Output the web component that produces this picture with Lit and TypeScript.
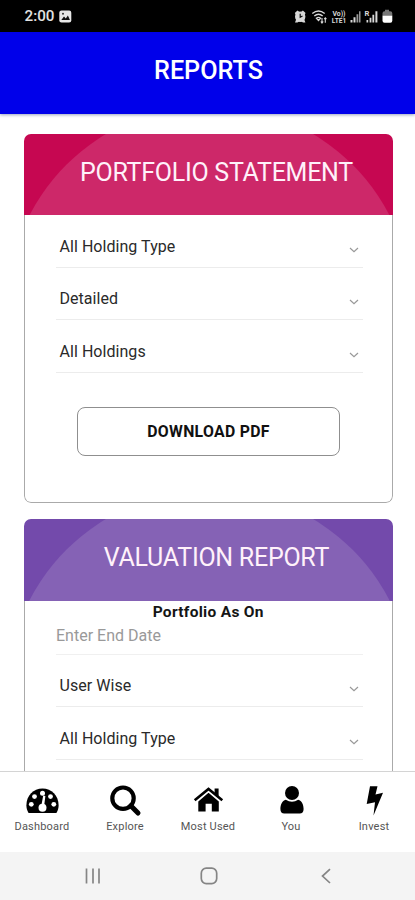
import { LitElement, html, css, svg } from "lit";
import { customElement, property } from "lit/decorators.js";

@customElement("status-bar")
class StatusBar extends LitElement {
  static styles = css`
    :host { display: flex; height: 32px; background: #000; color: #e2e2e2; align-items: center; justify-content: space-between; padding: 1px 22px 0 24.5px; box-sizing: border-box; position: relative; z-index: 1; }
    .left { display: flex; align-items: center; gap: 5px; font: 500 15.2px/31px Roboto, sans-serif; }
    svg { display: block; }
  `;
  render() {
    return html`
      <div class="left">
        <span>2:00</span>
        <svg width="13" height="13" viewBox="0 0 13 13"><rect x=".3" y=".5" width="12" height="12" rx="2.2" fill="#e8e8e8"/><path d="M2.3 10 5 6.6l1.8 1.9L8.9 5.6l2 4.4z" fill="#111"/><circle cx="4" cy="3.8" r="1" fill="#333"/></svg>
      </div>
      <svg width="100" height="16" viewBox="293 9 100 16" fill="#d8d8d8">
        <circle cx="300.2" cy="16.7" r="5.2"/><path d="M294.8 13l2.7-2.6 2 1.5-3.5 3.3zM305.6 13l-2.7-2.6-2 1.5 3.5 3.3zM295 22.5l1.5-4 3 2.5-2 1.5zM305.4 22.5l-1.5-4-3 2.5 2 1.5z"/>
        <path d="M300.2 13.8v3.4l2.3-1.2" fill="none" stroke="#111" stroke-width="1.2"/>
        <g fill="none" stroke="#d8d8d8" stroke-width="1.4"><path d="M312.3 13.5q6.2-5 12.4 0M314.3 16q4.2-3.4 8.4 0M316.4 18.2q2.1-1.6 4.2 0l-2.1 2.2z"/><path d="M322 23v-5M320.8 21.5l1.2 1.5 1.2-1.5M325.3 17.8v5M324.2 19.2l1.1-1.4 1.1 1.4" stroke-width="1.1"/></g>
        <text x="332.5" y="15.6" font-family="Roboto, sans-serif" font-weight="700" font-size="6.8" textLength="13" lengthAdjust="spacingAndGlyphs">Vo))</text>
        <text x="331.8" y="23" font-family="Roboto, sans-serif" font-weight="700" font-size="6.8" textLength="14.5" lengthAdjust="spacingAndGlyphs">LTE1</text>
        <path d="M350.5 20h2v2.5h-2zM353.5 17.3h2v5.2h-2z"/><path d="M356.5 14.3h1.8v8.2h-1.8zM359 11.3h1.5v11.2H359z" fill="#999"/>
        <text x="364.4" y="16.2" font-family="Roboto, sans-serif" font-weight="700" font-size="7.6">R</text>
        <path d="M366.5 20h1.7v2.5h-1.7zM369.6 17.7h1.8v4.8h-1.8zM372.4 14.7h1.8v7.8h-1.8zM375.4 11.3h2v11.2h-2z"/>
        <path d="M385 9.8h4v1.4h1.2q2.1 0 2.1 2V16h-9.8v-2.8q0-2 2.1-2h.4z" fill="#777"/><path d="M382.5 15.8h9.8v5q0 2-2 2h-5.8q-2 0-2-2z" fill="#fff"/>
      </svg>`;
  }
}

@customElement("select-row")
class SelectRow extends LitElement {
  @property() label = "";
  static styles = css`
    :host { display: flex; box-sizing: border-box; height: 52.6px; margin: 0 29px 0 31px; padding: 20.5px 4px 0 3.5px; border-bottom: 1px solid #ececec; justify-content: space-between; font: 400 16px/22px Roboto, sans-serif; color: #2a2a2a; letter-spacing: .05px; }
    svg { margin-top: 10px; }
  `;
  render() {
    return html`<span>${this.label}</span>
      <svg width="10" height="8" viewBox="0 0 10 8"><path d="M1 2l4 3.6L9 2" fill="none" stroke="#999" stroke-width="1.2"/></svg>`;
  }
}

@customElement("report-card")
class ReportCard extends LitElement {
  @property() heading = "";
  @property({ reflect: true }) tone = "rose";
  static styles = css`
    :host { display: flex; flex-direction: column; box-sizing: border-box; border-radius: 7px; background: #fff; overflow: hidden; flex: none; }
    .head { height: 81px; flex: none; display: grid; overflow: hidden; background: #c60751; }
    .head > * { grid-area: 1 / 1; }
    .arc { fill: #cd2869; display: block; }
    :host([tone="violet"]) .head { background: #734aab; height: 82px; }
    :host([tone="violet"]) .arc { fill: #8562b5; }
    .title { margin: 0; font: 400 25px/78px Roboto, sans-serif; letter-spacing: -.27px; color: #fff1fa; text-align: center; white-space: nowrap; padding-left: 16px; }
    .body { flex: 1; border: 1px solid #aaa; border-top: 0; border-radius: 0 0 7px 7px; }
  `;
  render() {
    return html`<div class="head">
        <svg class="arc" width="369" height="82" viewBox="0 0 369 82"><circle cx="185.5" cy="174" r="202.5"/></svg>
        <h2 class="title">${this.heading}</h2>
      </div><div class="body"><slot></slot></div>`;
  }
}

const icons = {
  dash: svg`<path d="M2.6 28C1.2 25.9.4 23.2.4 20.2.4 10.7 7.5 3.5 16.5 3.5s16.1 7.2 16.1 16.7c0 3-.8 5.7-2.2 7.8z"/><g fill="#fff"><circle cx="5.3" cy="19.3" r="2.4"/><circle cx="8.5" cy="11.6" r="2.4"/><circle cx="16.5" cy="8.2" r="2.5"/><circle cx="24.5" cy="11.6" r="2.4"/><circle cx="27.8" cy="19.3" r="2.4"/><circle cx="16.5" cy="22.7" r="4"/><path d="M15.3 21l1.9-10.4 2.2.4-1.3 10.5z"/></g>`,
  search: svg`<circle cx="14" cy="13.2" r="10.7" fill="none" stroke="#000" stroke-width="4.2"/><path d="M21.8 20.8l7.2 7.2" stroke="#000" stroke-width="5" stroke-linecap="round"/>`,
  home: svg`<path d="M6.3 16.5L16.5 7.8l10.3 8.7v10H19.8v-7.7h-6.2v7.7H6.3z"/><path d="M2.7 16.5L16.5 5.2l13.8 11.3" fill="none" stroke="#fff" stroke-width="3"/><path d="M2.7 15.3L16.5 4l13.8 11.3" fill="none" stroke="#000" stroke-width="2.6"/><path d="M22.6 3.5h4v8.5l-4-3.2z"/>`,
  user: svg`<circle cx="17" cy="8" r="7"/><path d="M10.8 14.7q6.2 4.3 12.4 0c3.8 1 5.4 5.1 5.4 9.3 0 3-1.5 4.5-3.8 4.5H9.2C6.9 28.5 5.4 27 5.4 24c0-4.200 1.600-8.300 5.400-9.300z"/>`,
  bolt: svg`<path d="M12 1.3h7.5l-2 8.2 7.5-1.7L15.5 30.5l1.5-13.2-8.3 1.800z"/>`,
};

@customElement("app-root")
class AppRoot extends LitElement {
  static styles = css`
    :host { display: flex; flex-direction: column; height: 900px; overflow: hidden; background: #fff; font-family: Roboto, sans-serif; }
    status-bar, .app-bar, .tabs, .system { flex: none; }
    .app-bar { height: 81.5px; box-sizing: border-box; background: #0000ea; color: #fff; font: 500 25.2px/78px Roboto, sans-serif; text-align: center; padding-left: 2px; box-shadow: 0 1px 3px #99a3c0; }
    .list { flex: 1; min-height: 0; overflow: hidden; display: flex; flex-direction: column; gap: 16px; padding: 20.5px 22.5px 0 24px; }
    .first { height: 369px; }
    .second { height: 400px; }
    .button { display: block; box-sizing: border-box; width: 263px; height: 49px; margin: 34px 0 0 52px; padding: 0; border: 1px solid #8f8f8f; border-radius: 8px; background: #fff; font: 700 15.8px/47px Roboto, sans-serif; letter-spacing: .3px; color: #111; }
    .caption { font: 700 15.5px/23px Roboto, sans-serif; color: #151515; text-align: center; letter-spacing: .3px; }
    .date { margin: 0 29px 0 31px; height: 30.5px; box-sizing: border-box; border-bottom: 1px solid #f0f0f0; font: 400 16px/23px Roboto, sans-serif; color: #999; }
    .tabs { display: flex; height: 81.5px; box-sizing: border-box; border-top: 1px solid #d4d4d4; background: #fff; }
    .tab { flex: 1; display: flex; flex-direction: column; align-items: center; padding-top: 13px; gap: 2px; font: 400 11px/16px Roboto, sans-serif; color: #555; letter-spacing: .2px; }
    .tab > * { margin-left: 1px; }
    .system { height: 48px; background: #f4f4f4; display: flex; justify-content: center; align-items: center; gap: 96.5px; padding-left: 3px; box-sizing: border-box; }
    svg { display: block; }
  `;
  render() {
    const tab = (icon: unknown, label: string) => html`<div class="tab"><svg width="33" height="32" viewBox="0 0 33 32">${icon}</svg><span>${label}</span></div>`;
    return html`
      <status-bar></status-bar>
      <header class="app-bar">REPORTS</header>
      <main class="list">
        <report-card class="first" heading="PORTFOLIO STATEMENT" tone="rose">
          <select-row label="All Holding Type"></select-row>
          <select-row label="Detailed"></select-row>
          <select-row label="All Holdings"></select-row>
          <button class="button">DOWNLOAD PDF</button>
        </report-card>
        <report-card class="second" heading="VALUATION REPORT" tone="violet">
          <div class="caption">Portfolio As On</div>
          <div class="date">Enter End Date</div>
          <select-row label="User Wise"></select-row>
          <select-row label="All Holding Type"></select-row>
        </report-card>
      </main>
      <nav class="tabs">
        ${tab(icons.dash, "Dashboard")}${tab(icons.search, "Explore")}${tab(icons.home, "Most Used")}${tab(icons.user, "You")}${tab(icons.bolt, "Invest")}
      </nav>
      <footer class="system">
        <svg width="20" height="20" viewBox="0 0 20 20"><path d="M3.5 2.5v15M10 2.5v15M16 2.5v15" stroke="#858585" stroke-width="1.7"/></svg>
        <svg width="20" height="20" viewBox="0 0 20 20"><rect x="2.3" y="2.2" width="15.4" height="15.4" rx="5" fill="none" stroke="#858585" stroke-width="1.7"/></svg>
        <svg width="20" height="20" viewBox="0 0 20 20"><path d="M14 3.2L6.5 10l7.5 7" fill="none" stroke="#858585" stroke-width="1.7"/></svg>
      </footer>`;
  }
}
